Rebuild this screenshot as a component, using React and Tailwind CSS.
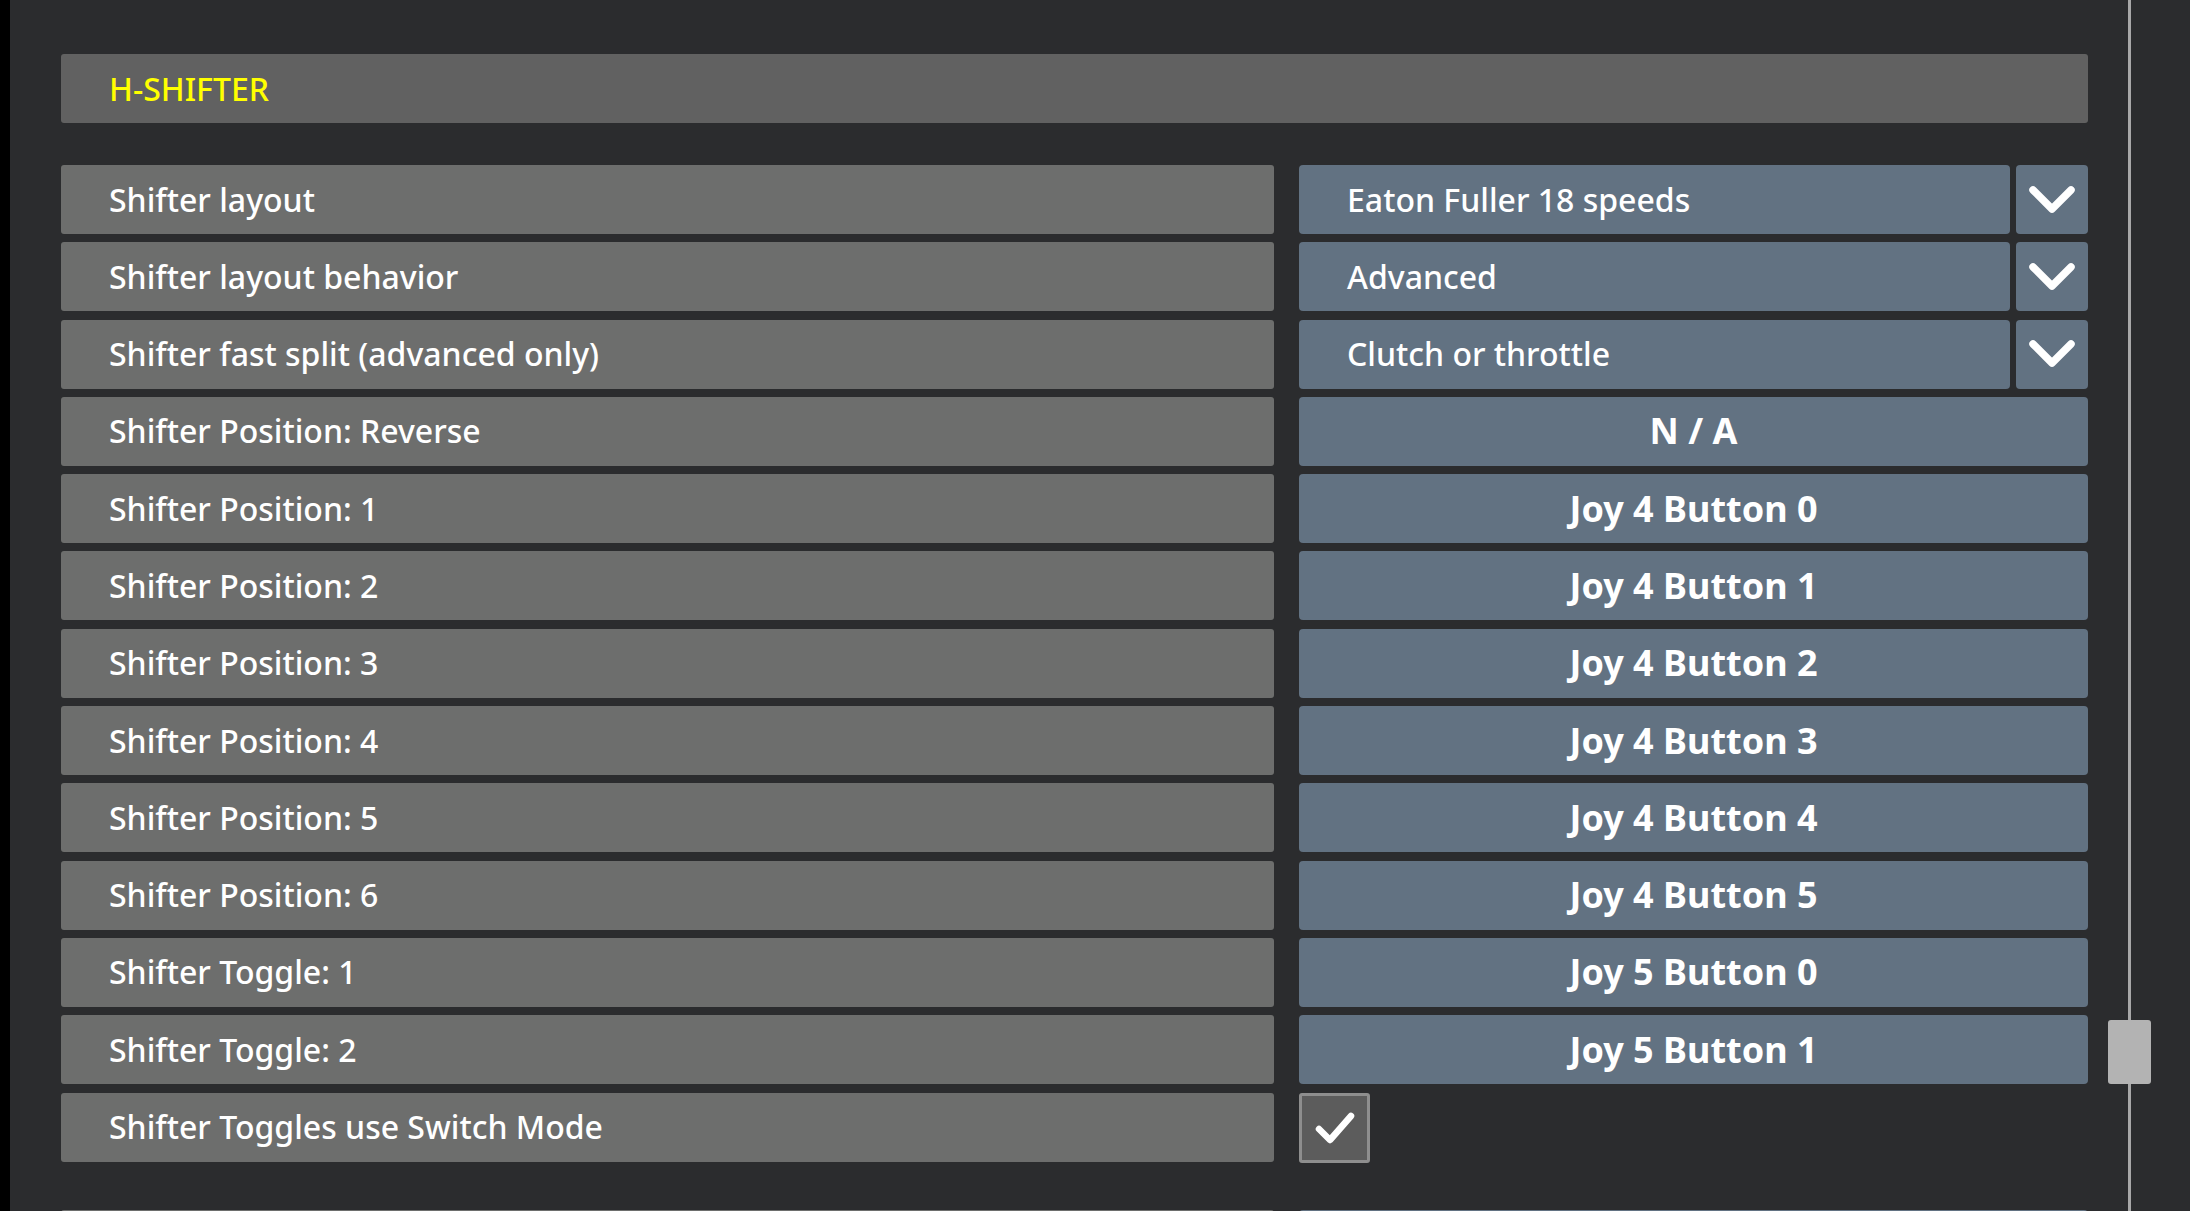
import React from "react";

const Chevron = () => (
  <svg width="48" height="30" viewBox="0 0 48 30" fill="none">
    <path d="M5 5 L24 24 L43 5" stroke="white" strokeWidth="7.5" strokeLinecap="round" strokeLinejoin="round" />
  </svg>
);

const dropdowns = [
  ["Shifter layout", "Eaton Fuller 18 speeds"],
  ["Shifter layout behavior", "Advanced"],
  ["Shifter fast split (advanced only)", "Clutch or throttle"],
];
const buttons = [
  ["Shifter Position: Reverse", "N / A"],
  ["Shifter Position: 1", "Joy 4 Button 0"],
  ["Shifter Position: 2", "Joy 4 Button 1"],
  ["Shifter Position: 3", "Joy 4 Button 2"],
  ["Shifter Position: 4", "Joy 4 Button 3"],
  ["Shifter Position: 5", "Joy 4 Button 4"],
  ["Shifter Position: 6", "Joy 4 Button 5"],
  ["Shifter Toggle: 1", "Joy 5 Button 0"],
  ["Shifter Toggle: 2", "Joy 5 Button 1"],
];

const Label = ({ children }) => (
  <div className="w-[1213px] h-[69px] shrink-0 bg-[#6d6e6d] rounded-[3px] flex items-center pl-[48px] text-[32px] font-medium text-white">
    {children}
  </div>
);

export default function App() {
  return (
    <div className="w-[2190px] h-[1211px] overflow-hidden bg-[#2b2c2e] flex" style={{ fontFamily: "'Noto Sans', sans-serif" }}>
      <div className="w-[10px] bg-black shrink-0" />
      <div className="w-[2078px] shrink-0 pl-[51px] pt-[54px]">
        <div className="h-[69px] bg-[#616161] rounded-[3px] flex items-center pl-[48px] text-[32px] font-medium text-[#ffff00]">H-SHIFTER</div>
        <div className="mt-[42px] flex flex-col gap-[8.3px]">
          {dropdowns.map(([l, v]) => (
            <div key={l} className="flex gap-[25px]">
              <Label>{l}</Label>
              <div className="flex gap-[6px] flex-1">
                <div className="flex-1 h-[69px] bg-[#627282] rounded-[4px] flex items-center pl-[48px] text-[32px] font-medium text-white">{v}</div>
                <div className="w-[72px] h-[69px] bg-[#627282] rounded-[4px] flex items-center justify-center"><Chevron /></div>
              </div>
            </div>
          ))}
          {buttons.map(([l, v]) => (
            <div key={l} className="flex gap-[25px]">
              <Label>{l}</Label>
              <div className="flex-1 h-[69px] bg-[#627282] rounded-[4px] flex items-center justify-center text-[36px] font-bold text-white">{v}</div>
            </div>
          ))}
          <div className="flex gap-[25px]">
            <Label>Shifter Toggles use Switch Mode</Label>
            <div className="w-[71px] h-[70px] bg-[#5c5c5c] border-[3px] border-[#8e8e8e] rounded-[3px] flex items-center justify-center">
              <svg width="42" height="36" viewBox="0 0 42 36" fill="none">
                <path d="M5 19 L16 30 L37 6" stroke="white" strokeWidth="6.5" strokeLinecap="round" strokeLinejoin="round" />
              </svg>
            </div>
          </div>
          <div className="flex gap-[25px] mt-[39px]">
            <Label>{""}</Label>
            <div className="flex-1 h-[69px] bg-[#627282] rounded-[4px]" />
          </div>
        </div>
      </div>
      <div className="relative flex-1">
        <div className="absolute left-[40px] top-0 w-[3px] h-full bg-[#a8a8a8]" />
        <div className="absolute left-[20px] top-[1020px] w-[43px] h-[64px] bg-[#b3b3b3] rounded-[3px]" />
      </div>
    </div>
  );
}
